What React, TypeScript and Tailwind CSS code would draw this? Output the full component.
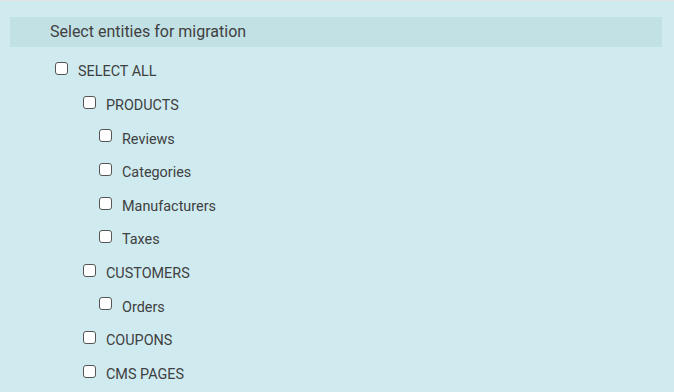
import React from "react";

type Item = { label: string; level: number };

const items: Item[] = [
  { label: "SELECT ALL", level: 0 },
  { label: "PRODUCTS", level: 1 },
  { label: "Reviews", level: 2 },
  { label: "Categories", level: 2 },
  { label: "Manufacturers", level: 2 },
  { label: "Taxes", level: 2 },
  { label: "CUSTOMERS", level: 1 },
  { label: "Orders", level: 2 },
  { label: "COUPONS", level: 1 },
  { label: "CMS PAGES", level: 1 },
];

const indent = ["pl-[55px]", "pl-[83px]", "pl-[99px]"];

export default function App() {
  return (
    <div className="w-[674px] h-[392px] overflow-hidden bg-[#cfebf0] border-t border-[#e4e2e2] font-['Roboto',sans-serif] text-[#404040]">
      <div className="pt-4 px-[10px] pr-[12px]">
        <div className="h-[30px] bg-[#c2e1e5] flex items-center pl-[40px] text-[16px]">
          Select entities for migration
        </div>
      </div>

      <ul className="mt-[5px]">
        {items.map((it) => (
          <li key={it.label} className={`h-[33.6px] flex items-center gap-[10px] text-[14.4px] ${indent[it.level]}`}>
            <span className="w-[13px] h-[13px] rounded-[3px] border border-[#555] bg-white shrink-0" />
            <span className="pt-[7px]">{it.label}</span>
          </li>
        ))}
      </ul>
    </div>
  );
}
